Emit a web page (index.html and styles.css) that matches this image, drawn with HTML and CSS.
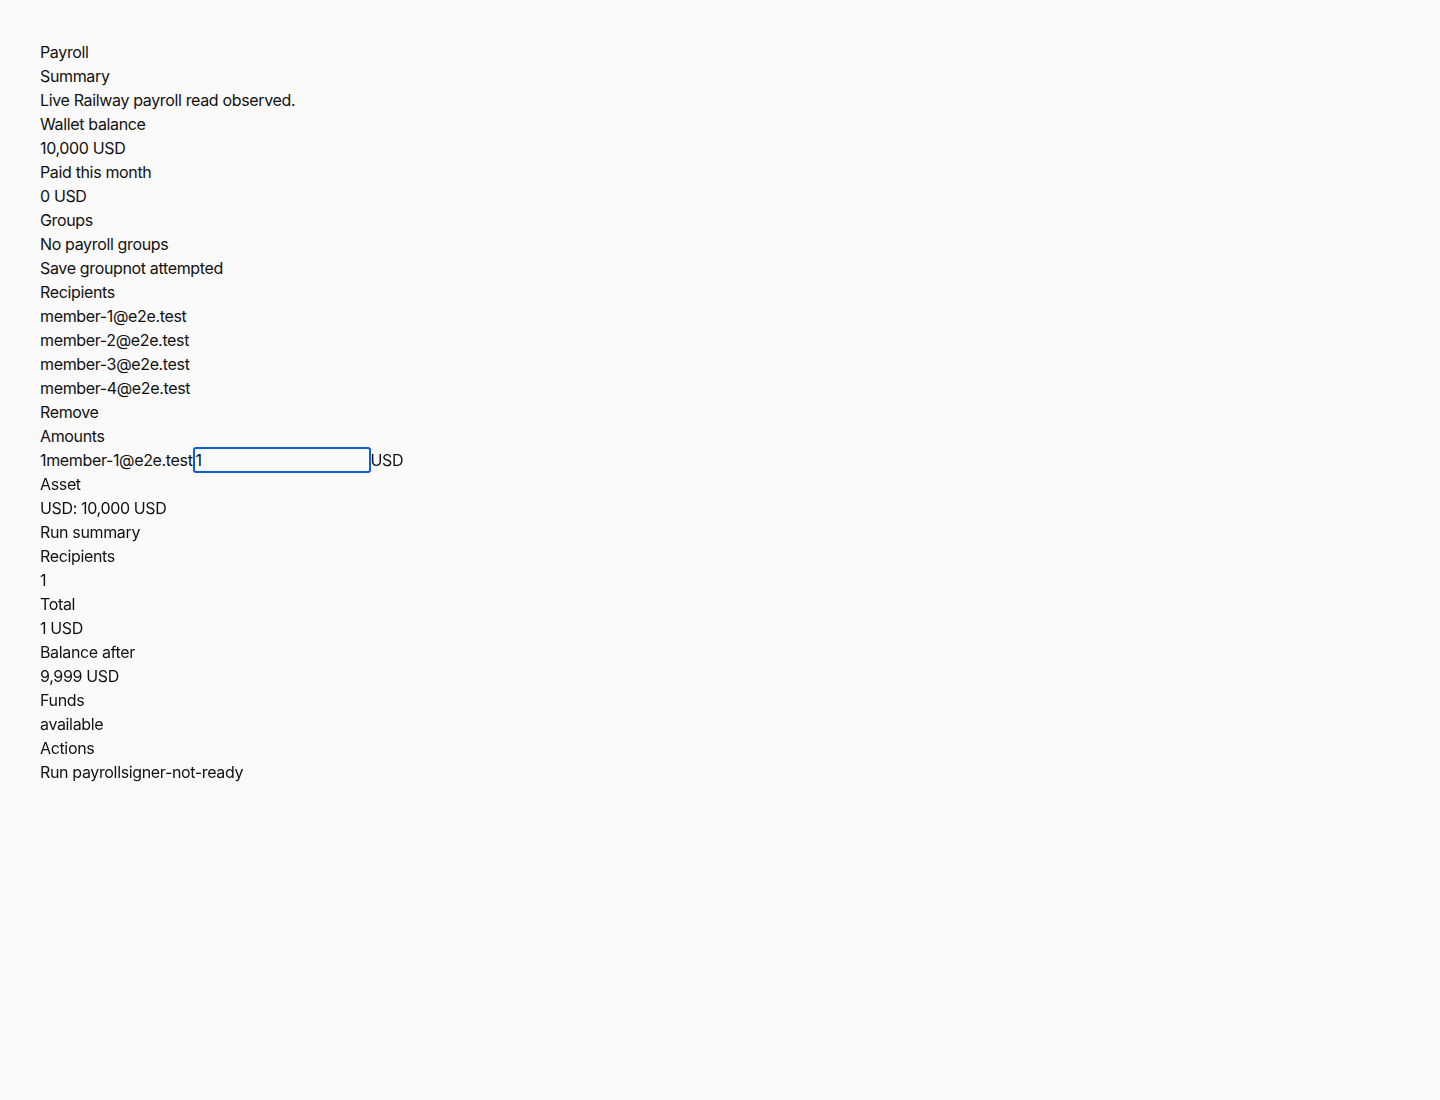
FILE: index.html
```html
<!DOCTYPE html>
<html lang="en">
<head>
<meta charset="utf-8">
<title>Payroll</title>
<link rel="stylesheet" href="styles.css">
</head>
<body>
<main class="page">
  <h1 class="line">Payroll</h1>
  <section>
    <h2 class="line">Summary</h2>
    <p class="line">Live Railway payroll read observed.</p>
    <div class="line">Wallet balance</div>
    <div class="line">10,000 USD</div>
    <div class="line">Paid this month</div>
    <div class="line">0 USD</div>
  </section>
  <section>
    <h2 class="line">Groups</h2>
    <div class="line">No payroll groups</div>
    <div class="line"><span>Save group</span><span>not attempted</span></div>
  </section>
  <section>
    <h2 class="line">Recipients</h2>
    <div class="line">member-1@e2e.test</div>
    <div class="line">member-2@e2e.test</div>
    <div class="line">member-3@e2e.test</div>
    <div class="line">member-4@e2e.test</div>
    <div class="line">Remove</div>
  </section>
  <section>
    <h2 class="line">Amounts</h2>
    <div class="line amount-row"><span>1</span><span>member-1@e2e.test</span><input class="amount-input" type="text" value="1" autofocus><span>USD</span></div>
  </section>
  <section>
    <h2 class="line">Asset</h2>
    <div class="line">USD: 10,000 USD</div>
  </section>
  <section>
    <h2 class="line">Run summary</h2>
    <div class="line">Recipients</div>
    <div class="line">1</div>
    <div class="line">Total</div>
    <div class="line">1 USD</div>
    <div class="line">Balance after</div>
    <div class="line">9,999 USD</div>
    <div class="line">Funds</div>
    <div class="line">available</div>
  </section>
  <section>
    <h2 class="line">Actions</h2>
    <div class="line"><span>Run payroll</span><span>signer-not-ready</span></div>
  </section>
</main>
</body>
</html>
```

FILE: styles.css
```css
html, body {
  margin: 0;
  padding: 0;
  background: #fafafa;
}
body {
  font-family: Inter, "Liberation Sans", sans-serif;
  font-size: 16px;
  line-height: 24px;
  letter-spacing: -0.35px;
  color: #111;
}
.page {
  padding: 40px;
}
.line {
  margin: 0;
  font-size: 16px;
  font-weight: 400;
  line-height: 24px;
  height: 24px;
}
.amount-row {
  display: flex;
  align-items: center;
}
.amount-input {
  box-sizing: border-box;
  width: 178px;
  height: 26px;
  margin: 0;
  padding: 0 1px;
  font: inherit;
  letter-spacing: inherit;
  color: #111;
  background: transparent;
  border: 2px solid #0b5fd4;
  border-radius: 3px;
  outline: none;
}
```
